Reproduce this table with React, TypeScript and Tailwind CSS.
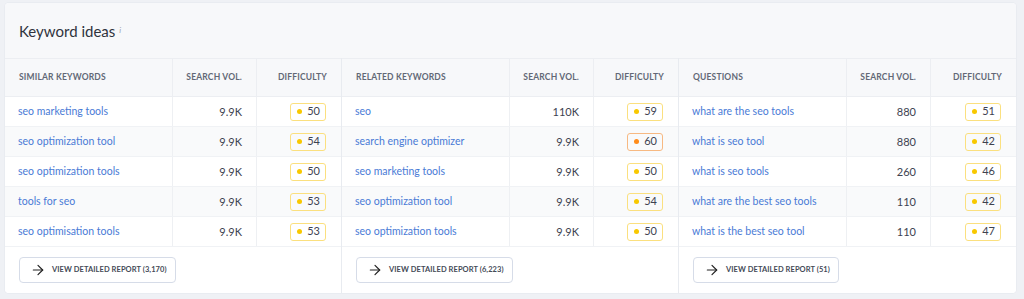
import { ArrowRight } from "lucide-react"

type Row = { kw: string; vol: string; diff: number }

const panels: { title: string; total: string; rows: Row[] }[] = [
  {
    title: "Similar keywords",
    total: "3,170",
    rows: [
      { kw: "seo marketing tools", vol: "9.9K", diff: 50 },
      { kw: "seo optimization tool", vol: "9.9K", diff: 54 },
      { kw: "seo optimization tools", vol: "9.9K", diff: 50 },
      { kw: "tools for seo", vol: "9.9K", diff: 53 },
      { kw: "seo optimisation tools", vol: "9.9K", diff: 53 },
    ],
  },
  {
    title: "Related keywords",
    total: "6,223",
    rows: [
      { kw: "seo", vol: "110K", diff: 59 },
      { kw: "search engine optimizer", vol: "9.9K", diff: 60 },
      { kw: "seo marketing tools", vol: "9.9K", diff: 50 },
      { kw: "seo optimization tool", vol: "9.9K", diff: 54 },
      { kw: "seo optimization tools", vol: "9.9K", diff: 50 },
    ],
  },
  {
    title: "Questions",
    total: "51",
    rows: [
      { kw: "what are the seo tools", vol: "880", diff: 51 },
      { kw: "what is seo tool", vol: "880", diff: 42 },
      { kw: "what is seo tools", vol: "260", diff: 46 },
      { kw: "what are the best seo tools", vol: "110", diff: 42 },
      { kw: "what is the best seo tool", vol: "110", diff: 47 },
    ],
  },
]

function Badge({ value }: { value: number }) {
  const hard = value >= 60
  return (
    <span
      className={
        hard
          ? "inline-flex items-center gap-[5px] h-[18px] pl-[6px] pr-[5px] rounded-[3px] border border-[#f7b982] text-[11px] text-[#3d4250]"
          : "inline-flex items-center gap-[5px] h-[18px] pl-[6px] pr-[5px] rounded-[3px] border border-[#fbe07f] text-[11px] text-[#3d4250]"
      }
    >
      <span
        className={
          hard
            ? "w-[5px] h-[5px] rounded-full bg-[#ff8c1a]"
            : "w-[5px] h-[5px] rounded-full bg-[#f8c800]"
        }
      />
      {value}
    </span>
  )
}

function Panel({ title, total, rows, last }: { title: string; total: string; rows: Row[]; last?: boolean }) {
  return (
    <div className={last ? "flex flex-col" : "flex flex-col border-r border-[#e8ebf0]"}>
      <div className="grid grid-cols-[168px_84px_1fr] h-[39px] bg-[#f7f8fa] border-t border-b border-[#eceef2] text-[8.5px] font-bold tracking-[0.02em] text-[#626876] uppercase">
        <div className="flex items-center pl-[14px] border-r border-[#eceef2]">{title}</div>
        <div className="flex items-center justify-end pr-[14px] border-r border-[#eceef2]">Search vol.</div>
        <div className="flex items-center justify-end pr-[14px]">Difficulty</div>
      </div>
      {rows.map((r, i) => (
        <div
          key={i}
          className={
            i % 2 === 1
              ? "grid grid-cols-[168px_84px_1fr] h-[30px] bg-[#f9fafb] border-b border-[#f0f2f5] text-[10.5px]"
              : "grid grid-cols-[168px_84px_1fr] h-[30px] bg-white border-b border-[#f0f2f5] text-[10.5px]"
          }
        >
          <div className="flex items-center pl-[13px] pt-[1px] border-r border-[#eef0f3] text-[#4a7bd6]">{r.kw}</div>
          <div className="flex items-center justify-end pr-[14px] pt-[1px] border-r border-[#eef0f3] text-[11px] text-[#3d4250]">{r.vol}</div>
          <div className="flex items-center justify-end pr-[15px]">
            <Badge value={r.diff} />
          </div>
        </div>
      ))}
      <div className="px-[14px] pt-[10px] pb-[10px] bg-white">
        <button className="flex items-center gap-[6px] h-[26px] pl-[10px] pr-[8px] rounded-[4px] border border-[#d6dce8] bg-white text-[7.5px] font-bold tracking-[0.01em] text-[#454a57]">
          <ArrowRight size={16} strokeWidth={1.8} className="text-[#222]" />
          VIEW DETAILED REPORT ({total})
        </button>
      </div>
    </div>
  )
}

export default function App() {
  return (
    <div className="w-[1024px] h-[299px] bg-[#eff1f5] pt-[3px] px-[5px] font-['Lato','Noto_Sans',sans-serif]">
      <div className="w-[1011px] rounded-[4px] bg-white overflow-hidden shadow-[0_0_0_1px_#e9ecf1]">
        <div className="h-[55px] bg-[#f7f8fa] flex items-center pl-[14px] pt-[2px]">
          <h2 className="text-[15px] text-[#2f333d] leading-none">
            Keyword ideas
            <sup className="ml-[4px] text-[8px] italic text-[#9aa1b0]">i</sup>
          </h2>
        </div>
        <div className="grid grid-cols-[337px_337px_1fr]">
          {panels.map((p, i) => (
            <Panel key={p.title} title={p.title} total={p.total} rows={p.rows} last={i === 2} />
          ))}
        </div>
      </div>
    </div>
  )
}
